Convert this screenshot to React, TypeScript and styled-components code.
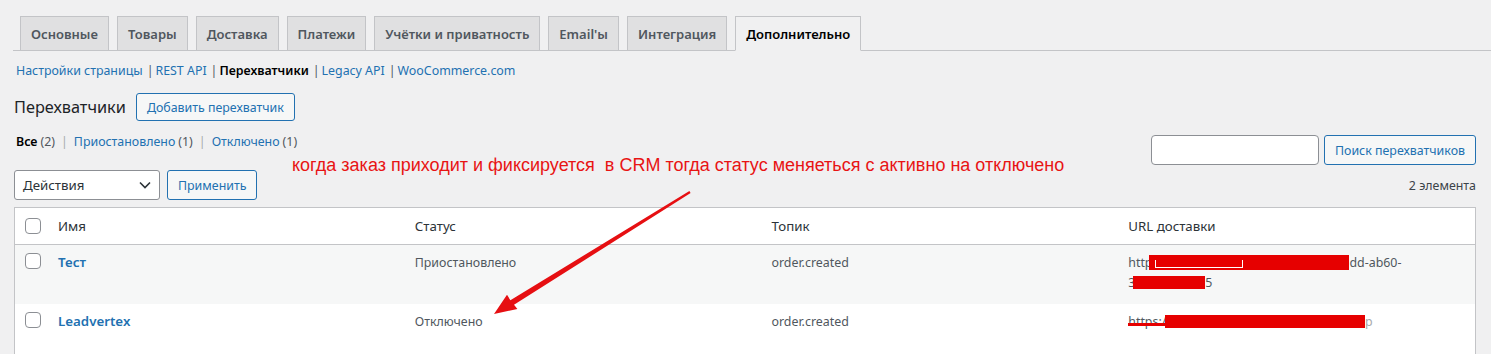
import React from "react";
import styled, { createGlobalStyle } from "styled-components";

const GlobalStyle = createGlobalStyle`
  html, body {
    margin: 0;
    padding: 0;
    background: #f0f0f1;
  }
  body {
    font-family: "Noto Sans", "Open Sans", sans-serif;
    font-size: 12.4px;
    color: #3c434a;
  }
`;

const tabs = [
  "Основные",
  "Товары",
  "Доставка",
  "Платежи",
  "Учётки и приватность",
  "Email'ы",
  "Интеграция",
  "Дополнительно",
];

const subLinks = ["Настройки страницы", "REST API", "Перехватчики", "Legacy API", "WooCommerce.com"];

const App: React.FC = () => {
  return (
    <>
      <GlobalStyle />
      <Page>
        <TabBar>
          {tabs.map((tab, i) => (
            <Tab key={tab} $active={i === tabs.length - 1}>
              {tab}
            </Tab>
          ))}
        </TabBar>

        <SubNav>
          {subLinks.map((link, i) => (
            <React.Fragment key={link}>
              {i > 0 && <Sep>|</Sep>}
              <SubLink $current={link === "Перехватчики"}>{link}</SubLink>
            </React.Fragment>
          ))}
        </SubNav>

        <TitleRow>
          <Title>Перехватчики</Title>
          <OutlineButton>Добавить перехватчик</OutlineButton>
        </TitleRow>

        <FilterRow>
          <Filters>
            <FilterLink $current>Все</FilterLink>
            <Count>(2)</Count>
            <FilterSep>|</FilterSep>
            <FilterLink>Приостановлено</FilterLink>
            <Count>(1)</Count>
            <FilterSep>|</FilterSep>
            <FilterLink>Отключено</FilterLink>
            <Count>(1)</Count>
          </Filters>
          <SearchBox>
            <SearchInput />
            <OutlineButton>Поиск перехватчиков</OutlineButton>
          </SearchBox>
        </FilterRow>

        <ActionsRow>
          <Select>
            <span>Действия</span>
            <svg width="16" height="16" viewBox="0 0 16 16">
              <path d="M3 5.5 L8 10.5 L13 5.5" fill="none" stroke="#2c3338" strokeWidth="1.6" />
            </svg>
          </Select>
          <OutlineButton>Применить</OutlineButton>
          <ItemCount>2 элемента</ItemCount>
        </ActionsRow>

        <Table>
          <HeadRow>
            <CheckCell>
              <CheckBox />
            </CheckCell>
            <HeadCell>Имя</HeadCell>
            <HeadCell>Статус</HeadCell>
            <HeadCell>Топик</HeadCell>
            <HeadCell>URL доставки</HeadCell>
          </HeadRow>

          <BodyRow $alt>
            <CheckCell>
              <CheckBox />
            </CheckCell>
            <Cell>
              <RowTitle>Тест</RowTitle>
            </Cell>
            <Cell>Приостановлено</Cell>
            <Cell>order.created</Cell>
            <Cell>
              <UrlLine>
                http
                <Redact $w={200} $ml={-3} $h={15}>
                  <RedactHole $w={88} $l={6} />
                </Redact>
                dd-ab60-
              </UrlLine>
              <UrlLine>
                3<Redact $w={72} $ml={-2} $h={13} />5
              </UrlLine>
            </Cell>
          </BodyRow>

          <BodyRow>
            <CheckCell>
              <CheckBox />
            </CheckCell>
            <Cell>
              <RowTitle>Leadvertex</RowTitle>
            </Cell>
            <Cell>Отключено</Cell>
            <Cell>order.created</Cell>
            <Cell>
              <UrlLine>
                <Struck>https://</Struck>
                <Redact $w={200} $ml={-6} $h={13} />
                <Muted>p</Muted>
              </UrlLine>
            </Cell>
          </BodyRow>
        </Table>

        <Annotation>когда заказ приходит и фиксируется  в CRM тогда статус меняеться с активно на отключено</Annotation>
        <ArrowLayer width="1491" height="354" viewBox="0 0 1491 354">
          <polygon
            points="689.4,191 510.4,300.2 507,294.8 494,314 517.4,309 514,304.8 690.6,193"
            fill="#e60f12"
          />
        </ArrowLayer>
      </Page>
    </>
  );
};

export default App;

const Page = styled.div`
  position: relative;
  padding: 16px 15px 0 13px;
  height: 354px;
  box-sizing: border-box;
  overflow: hidden;
`;

const TabBar = styled.div`
  display: flex;
  gap: 8px;
  padding-left: 7px;
  margin-right: -15px;
  border-bottom: 1px solid #c3c4c7;
`;

const Tab = styled.div<{ $active?: boolean }>`
  height: 35px;
  box-sizing: border-box;
  margin-bottom: -1px;
  padding: 0 10px;
  display: flex;
  align-items: center;
  border: 1px solid #c3c4c7;
  border-bottom-color: ${(p) => (p.$active ? "#f0f0f1" : "#c3c4c7")};
  background: ${(p) => (p.$active ? "#f0f0f1" : "#e0e0e1")};
  color: ${(p) => (p.$active ? "#000" : "#50575e")};
  font-size: 13px;
  font-weight: 600;
  white-space: nowrap;
`;

const SubNav = styled.div`
  display: flex;
  align-items: center;
  margin: 10px 0 0 3px;
  line-height: 20px;
`;

const Sep = styled.span`
  color: #50575e;
  margin: 0 2px 0 4px;
`;

const SubLink = styled.span<{ $current?: boolean }>`
  color: ${(p) => (p.$current ? "#000" : "#2271b1")};
  font-weight: ${(p) => (p.$current ? 600 : 400)};
`;

const TitleRow = styled.div`
  display: flex;
  align-items: center;
  gap: 10px;
  margin: 12px 0 0 1px;
  height: 28px;
`;

const Title = styled.h1`
  margin: 0;
  font-size: 16.3px;
  font-weight: 400;
  color: #1d2327;
`;

const OutlineButton = styled.button`
  height: 100%;
  min-height: 28px;
  box-sizing: border-box;
  padding: 0 10px;
  border: 1px solid #2271b1;
  border-radius: 3px;
  background: #f6f7f7;
  color: #2271b1;
  font-family: inherit;
  font-size: 12.4px;
  white-space: nowrap;
`;

const FilterRow = styled.div`
  display: flex;
  justify-content: space-between;
  align-items: flex-start;
  margin-top: 11px;
  height: 33px;
`;

const Filters = styled.div`
  display: flex;
  align-items: center;
  margin-left: 3px;
  line-height: 20px;
`;

const FilterLink = styled.span<{ $current?: boolean }>`
  color: ${(p) => (p.$current ? "#000" : "#2271b1")};
  font-weight: ${(p) => (p.$current ? 600 : 400)};
`;

const Count = styled.span`
  color: #50575e;
  margin-left: 3px;
`;

const FilterSep = styled.span`
  color: #a7aaad;
  margin: 0 6px;
`;

const SearchBox = styled.div`
  display: flex;
  gap: 5px;
  height: 30px;
  margin-top: 3px;
`;

const SearchInput = styled.div`
  width: 168px;
  box-sizing: border-box;
  border: 1px solid #8c8f94;
  border-radius: 4px;
  background: #fff;
`;

const ActionsRow = styled.div`
  display: flex;
  align-items: center;
  gap: 7px;
  margin: 5px 0 0 1px;
  height: 30px;
`;

const Select = styled.div`
  width: 146px;
  height: 30px;
  box-sizing: border-box;
  display: flex;
  align-items: center;
  justify-content: space-between;
  padding: 0 6px 0 8px;
  border: 1px solid #8c8f94;
  border-radius: 3px;
  background: #fff;
  color: #2c3338;
  font-size: 13.3px;
`;

const ItemCount = styled.span`
  margin-left: auto;
  color: #3c434a;
`;

const Table = styled.div`
  margin: 7px 0 0 1px;
  border: 1px solid #c3c4c7;
  border-bottom: none;
  background: #fff;
`;

const HeadRow = styled.div`
  display: grid;
  grid-template-columns: 33px repeat(4, 1fr);
  align-items: center;
  height: 36px;
  border-bottom: 1px solid #c3c4c7;
`;

const BodyRow = styled.div<{ $alt?: boolean }>`
  display: grid;
  grid-template-columns: 33px repeat(4, 1fr);
  align-items: start;
  height: 59px;
  box-sizing: border-box;
  padding-top: 8px;
  background: ${(p) => (p.$alt ? "#f6f7f7" : "#fff")};
`;

const CheckCell = styled.div`
  display: flex;
  padding: 3px 0 0 10px;
`;

const CheckBox = styled.span`
  display: block;
  width: 16px;
  height: 16px;
  box-sizing: border-box;
  border: 1px solid #8c8f94;
  border-radius: 4px;
  background: #fff;
  margin-top: -3px;
`;

const HeadCell = styled.div`
  padding-left: 10px;
  font-size: 13.3px;
  color: #2c3338;
`;

const Cell = styled.div`
  padding-left: 10px;
  line-height: 19.5px;
  color: #50575e;
`;

const RowTitle = styled.span`
  color: #2271b1;
  font-size: 13.3px;
  font-weight: 600;
`;

const UrlLine = styled.div`
  display: flex;
  align-items: center;
  white-space: nowrap;
`;

const Redact = styled.span<{ $w: number; $ml?: number; $h: number }>`
  position: relative;
  display: inline-block;
  width: ${(p) => p.$w}px;
  height: ${(p) => p.$h}px;
  margin-left: ${(p) => p.$ml ?? 0}px;
  background: #e60000;
`;

const RedactHole = styled.span<{ $w: number; $l: number }>`
  position: absolute;
  left: ${(p) => p.$l}px;
  top: 5px;
  width: ${(p) => p.$w}px;
  height: 8px;
  box-sizing: border-box;
  border: 1px solid #fff;
  border-top: none;
`;

const Struck = styled.span`
  position: relative;
  &::after {
    content: "";
    position: absolute;
    left: 0;
    right: 0;
    top: 11px;
    height: 3px;
    background: #e60000;
  }
`;

const Muted = styled.span`
  color: #a7aaad;
`;

const Annotation = styled.div`
  position: absolute;
  left: 292px;
  top: 155px;
  font-family: "Liberation Sans", Arial, sans-serif;
  font-size: 18px;
  color: #e81414;
  white-space: pre;
`;

const ArrowLayer = styled.svg`
  position: absolute;
  left: 0;
  top: 0;
  pointer-events: none;
`;
